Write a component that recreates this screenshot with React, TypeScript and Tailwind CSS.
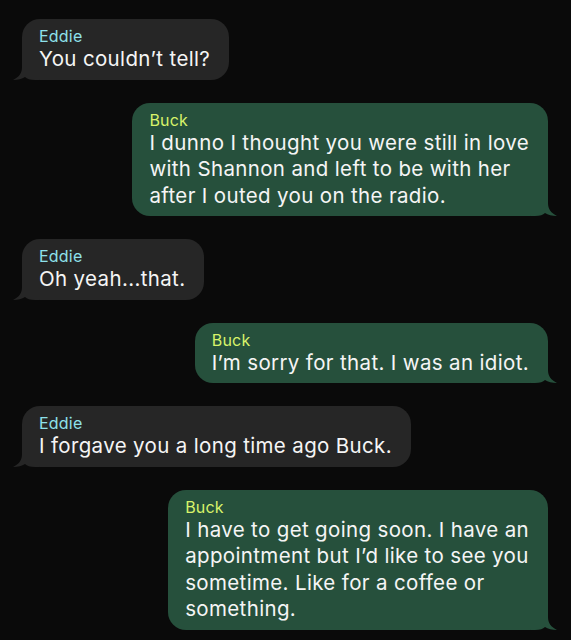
const messages = [
  { from: 'Eddie', lines: ['You couldn’t tell?'] },
  {
    from: 'Buck',
    lines: [
      'I dunno I thought you were still in love',
      'with Shannon and left to be with her',
      'after I outed you on the radio.',
    ],
  },
  { from: 'Eddie', lines: ['Oh yeah...that.'] },
  { from: 'Buck', lines: ['I’m sorry for that. I was an idiot.'] },
  { from: 'Eddie', lines: ['I forgave you a long time ago Buck.'] },
  {
    from: 'Buck',
    lines: [
      'I have to get going soon. I have an',
      'appointment but I’d like to see you',
      'sometime. Like for a coffee or',
      'something.',
    ],
  },
];

const Tail = ({ mine }: { mine: boolean }) => (
  <svg
    width="26"
    height="24"
    viewBox="0 0 26 24"
    className={
      mine
        ? 'absolute -right-[9px] bottom-0 -scale-x-100'
        : 'absolute -left-[9px] bottom-0'
    }
  >
    <path
      d="M9 0 L9 11 C9 17 6 21 0 24 C5 24 9 23 12 21 C14 23 17 24 22 24 L26 24 L26 0 Z"
      fill={mine ? '#26503c' : '#262626'}
    />
  </svg>
);

const Bubble = ({ from, lines }: { from: string; lines: string[] }) => {
  const mine = from === 'Buck';

  return (
    <div className={`flex ${mine ? 'justify-end' : 'justify-start'}`}>
      <div
        className={`relative rounded-[18px] pt-[7px] pb-[7px] pl-[17px] pr-[19px] ${
          mine ? 'bg-[#26503c]' : 'bg-[#262626]'
        }`}
      >
        <Tail mine={mine} />
        <div className="relative">
          <div
            className={`text-[16px] leading-[20px] tracking-[0.2px] ${
              mine ? 'text-[#d8f36a]' : 'text-[#8ee0ea]'
            }`}
          >
            {from}
          </div>
          {lines.map((line) => (
            <div
              key={line}
              className="whitespace-nowrap text-[20.5px] leading-[26.5px] tracking-[0.35px] text-[#f5f5f5]"
            >
              {line}
            </div>
          ))}
        </div>
      </div>
    </div>
  );
};

export default function App() {
  return (
    <div
      className="min-h-[640px] w-[571px] bg-[#0a0a0a] pt-[19px] pl-[22px] pr-[23px]"
      style={{ fontFamily: 'Inter, "Noto Sans", sans-serif' }}
    >
      <div className="flex flex-col gap-[23px]">
        {messages.map((m, i) => (
          <Bubble key={i} from={m.from} lines={m.lines} />
        ))}
      </div>
    </div>
  );
}
